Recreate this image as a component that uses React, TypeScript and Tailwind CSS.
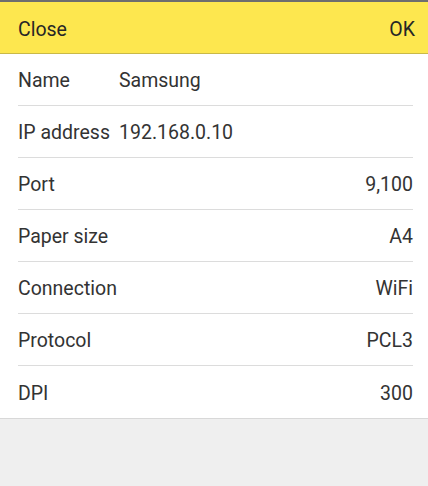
const rows: { label: string; value: string; inline?: boolean }[] = [
  { label: "Name", value: "Samsung", inline: true },
  { label: "IP address", value: "192.168.0.10", inline: true },
  { label: "Port", value: "9,100" },
  { label: "Paper size", value: "A4" },
  { label: "Connection", value: "WiFi" },
  { label: "Protocol", value: "PCL3" },
  { label: "DPI", value: "300" },
]

export default function App() {
  return (
    <div className="w-[428px] h-[486px] bg-[#efefef] flex flex-col font-['Roboto',sans-serif] text-[19.5px] text-[#333333]">
      <div className="h-[2px] bg-[#6e6e6e]" />
      <div className="h-[52px] bg-[#fde74f] border-b border-[#c9b948] flex items-center justify-between pl-[18px] pr-[13px] pt-[4px]">
        <button className="text-[#262626]">Close</button>
        <button className="text-[#262626]">OK</button>
      </div>
      <div className="bg-white border-b border-[#d8d8d8] pl-[18px] pr-[15px]">
        {rows.map((r, i) => (
          <div
            key={r.label}
            className={`h-[52px] pt-[3px] flex items-center ${i < rows.length - 1 ? "border-b border-[#dcdcdc]" : ""} ${r.inline ? "" : "justify-between"}`}
          >
            <span className={r.inline ? "w-[101px]" : ""}>{r.label}</span>
            <span>{r.value}</span>
          </div>
        ))}
      </div>
    </div>
  )
}
